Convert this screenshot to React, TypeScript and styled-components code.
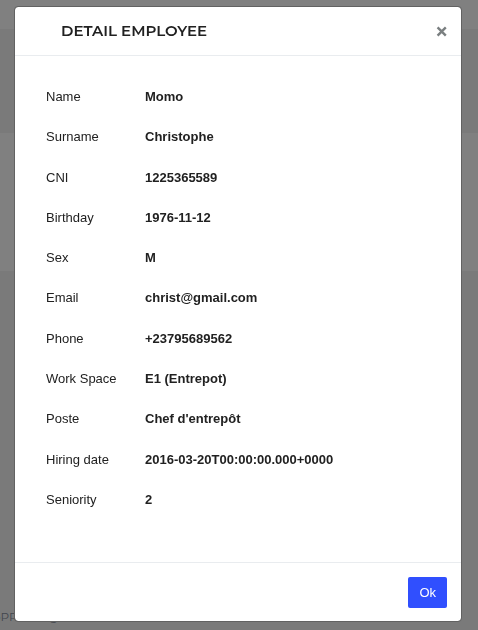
import React from "react";
import styled, { createGlobalStyle } from "styled-components";

const GlobalStyle = createGlobalStyle`
  *, *::before, *::after { box-sizing: border-box; }
  body {
    margin: 0;
    background: #7a7a7a;
    color: #212529;
    font-family: "Liberation Sans", Arial, sans-serif;
    font-size: 13px;
    line-height: 20px;
  }
`;

const Page = styled.div`
  display: flex;
  flex-direction: column;
  min-height: 100vh;
  overflow: hidden;
`;

const TopBar = styled.div`
  height: 29px;
  background: #808080;
`;

const Panel = styled.div`
  height: 138px;
  margin-top: 104px;
  background: #808080;
`;

const PageFooter = styled.footer`
  display: flex;
  gap: 32px;
  margin: auto 0 0 -7px;
  padding-bottom: 3px;
  color: #42464d;
  font-family: Montserrat, Inter, sans-serif;
  font-size: 12px;
`;

const Overlay = styled.div`
  position: fixed;
  inset: 0;
  overflow: auto;
  padding: 6px 16px 8px 14px;
`;

const Dialog = styled.section`
  background: #fff;
  background-clip: padding-box;
  border: 1px solid #626262;
  border-radius: 4px;
`;

const DialogHeader = styled.header`
  display: flex;
  align-items: center;
  justify-content: space-between;
  height: 49px;
  padding: 0 12px 0 46px;
  border-bottom: 1px solid #e9ecef;
`;

const Title = styled.h1`
  margin: 0;
  color: #212121;
  font-family: Montserrat, Inter, sans-serif;
  font-size: 15px;
  font-weight: 600;
  line-height: 20px;
`;

const CloseButton = styled.button`
  display: flex;
  padding: 2px;
  border: 0;
  background: none;
  color: #7a7f80;
  cursor: pointer;
`;

const Details = styled.dl`
  display: grid;
  grid-auto-rows: 1fr;
  min-height: 443px;
  margin: 0;
  padding: 0 31px;
`;

const DialogBody = styled.div`
  padding: 21px 0 42px;
`;

const DetailRow = styled.div`
  display: grid;
  grid-template-columns: 99px 1fr;
  align-items: center;
`;

const Label = styled.dt`
  color: #212121;
`;

const Value = styled.dd`
  margin: 0;
  color: #212121;
  font-weight: 700;
`;

const DialogFooter = styled.footer`
  display: flex;
  justify-content: flex-end;
  padding: 14px 14px 13px;
  border-top: 1px solid #e9ecef;
`;

const OkButton = styled.button`
  height: 31px;
  padding: 0 11px;
  border: 0;
  border-radius: 2px;
  background: #304ffe;
  color: #fff;
  font: 13px/20px "Liberation Sans", Arial, sans-serif;
  cursor: pointer;
`;

const employee = [
  ["Name", "Momo"],
  ["Surname", "Christophe"],
  ["CNI", "1225365589"],
  ["Birthday", "1976-11-12"],
  ["Sex", "M"],
  ["Email", "christ@gmail.com"],
  ["Phone", "+23795689562"],
  ["Work Space", "E1 (Entrepot)"],
  ["Poste", "Chef d'entrepôt"],
  ["Hiring date", "2016-03-20T00:00:00.000+0000"],
  ["Seniority", "2"],
];

export default function App() {
  return (
    <>
      <GlobalStyle />
      <Page aria-hidden="true">
        <TopBar />
        <Panel />
        <PageFooter>
          <span>oPR</span>
          <span>g</span>
        </PageFooter>
      </Page>
      <Overlay>
        <Dialog role="dialog" aria-modal="true" aria-labelledby="dialog-title">
          <DialogHeader>
            <Title id="dialog-title">DETAIL EMPLOYEE</Title>
            <CloseButton type="button" aria-label="Close">
              <svg width="11" height="11" viewBox="0 0 11 11" fill="none" stroke="currentColor" strokeWidth="2.4">
                <path d="M1.6 1.4 9.8 9.6M9.8 1.4 1.6 9.6" />
              </svg>
            </CloseButton>
          </DialogHeader>
          <DialogBody>
            <Details>
              {employee.map(([label, value]) => (
                <DetailRow key={label}>
                  <Label>{label}</Label>
                  <Value>{value}</Value>
                </DetailRow>
              ))}
            </Details>
          </DialogBody>
          <DialogFooter>
            <OkButton type="button">Ok</OkButton>
          </DialogFooter>
        </Dialog>
      </Overlay>
    </>
  );
}
